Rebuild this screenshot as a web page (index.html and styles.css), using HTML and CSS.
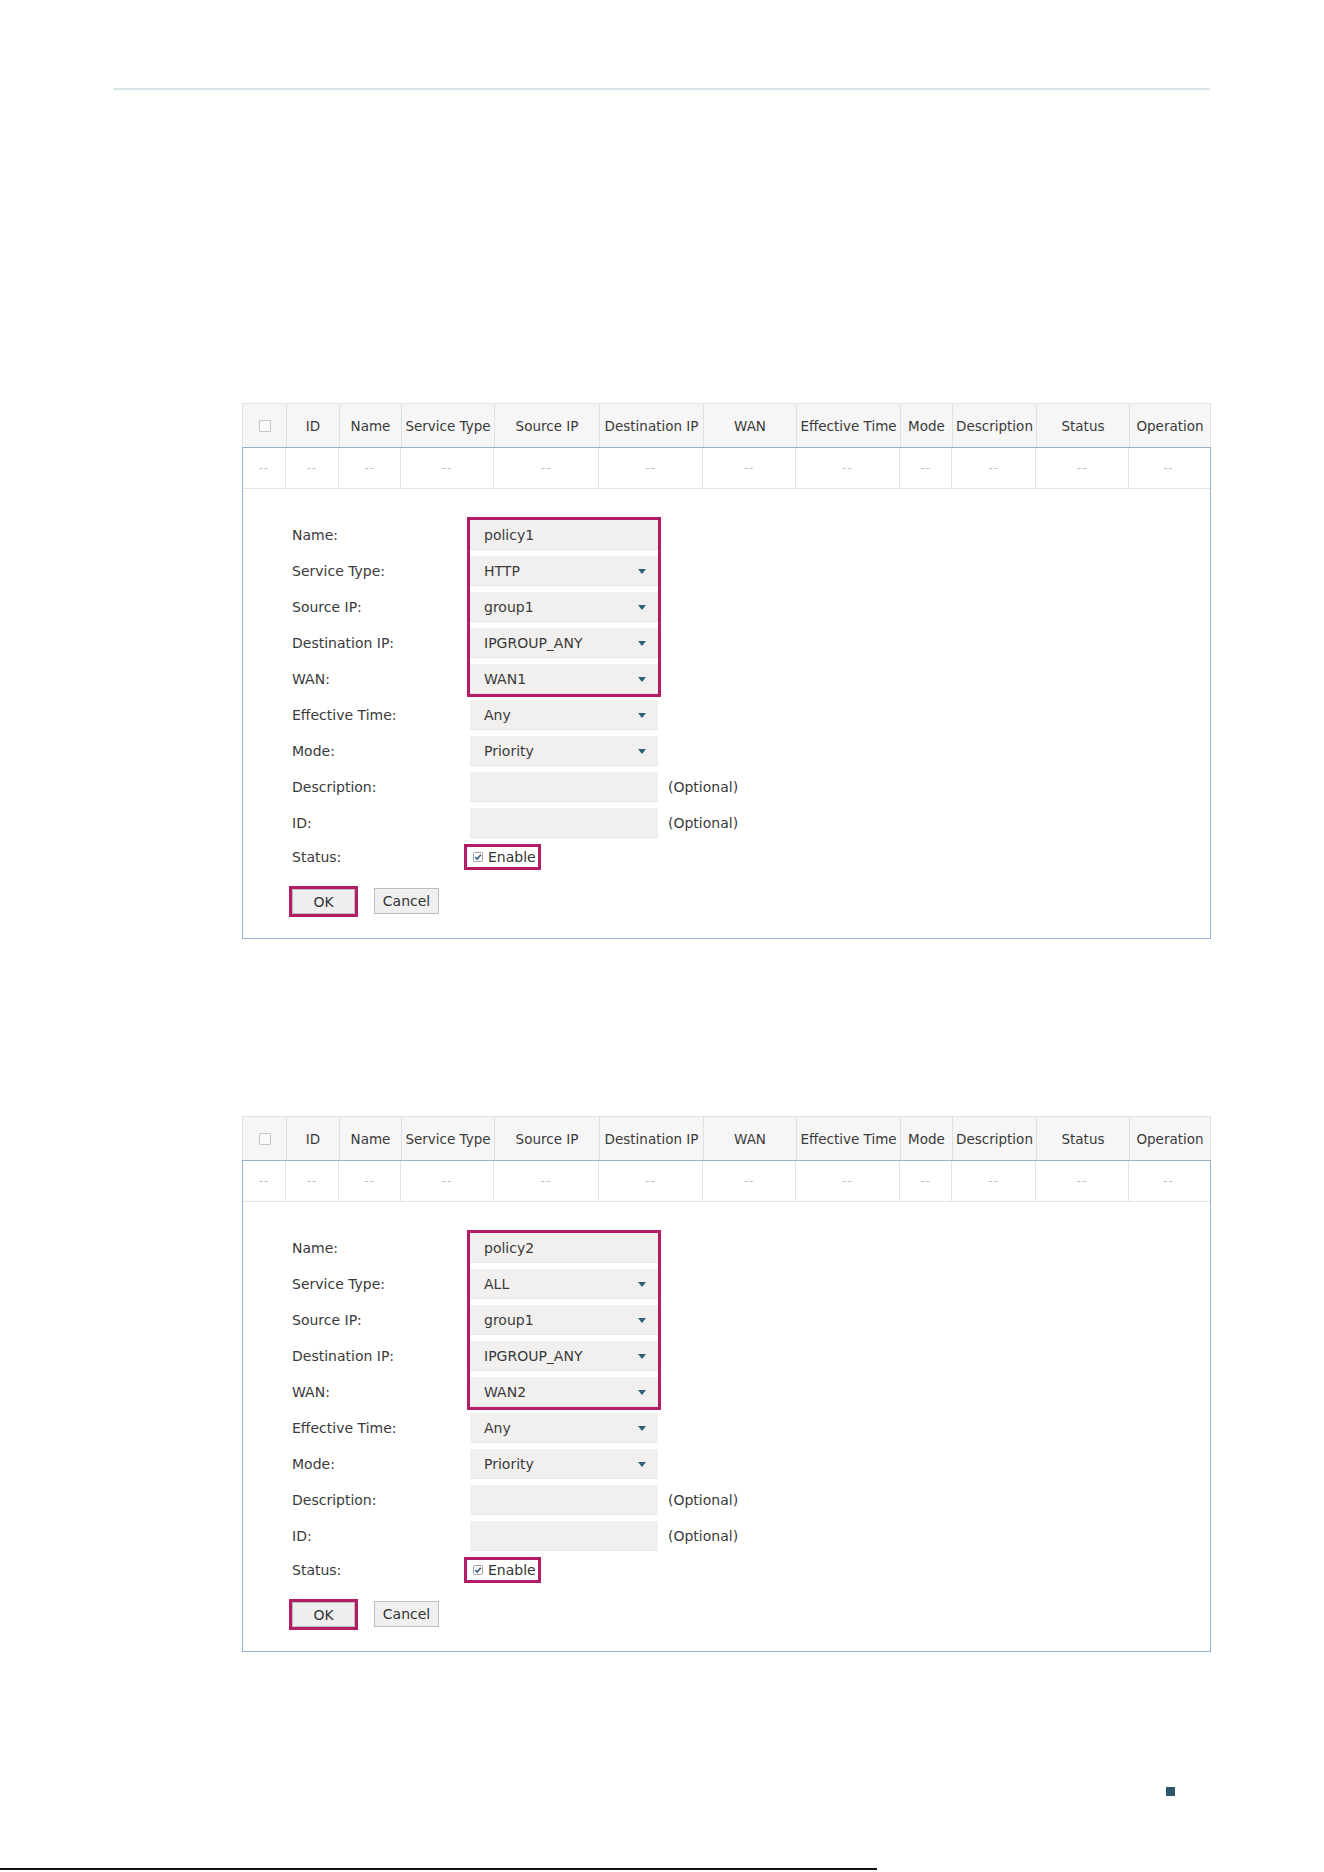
FILE: index.html
```html
<!DOCTYPE html>
<html lang="en">
<head>
  <meta charset="UTF-8">
  <meta name="viewport" content="width=device-width, initial-scale=1.0">
  <title>Policy Routing</title>
  <link rel="stylesheet" href="styles.css">
</head>
<body>

  <div class="page">
    <div class="top-rule"></div>

    <!-- Screenshot 1: policy1 on WAN1 -->
    <div class="shot">
      <div class="table-head">
        <div class="th"><span class="head-box"></span></div>
        <div class="th">ID</div>
        <div class="th">Name</div>
        <div class="th">Service Type</div>
        <div class="th">Source IP</div>
        <div class="th">Destination IP</div>
        <div class="th">WAN</div>
        <div class="th">Effective Time</div>
        <div class="th">Mode</div>
        <div class="th">Description</div>
        <div class="th">Status</div>
        <div class="th">Operation</div>
      </div>
      <div class="panel">
        <div class="table-row">
          <div class="td">--</div><div class="td">--</div><div class="td">--</div>
          <div class="td">--</div><div class="td">--</div><div class="td">--</div>
          <div class="td">--</div><div class="td">--</div><div class="td">--</div>
          <div class="td">--</div><div class="td">--</div><div class="td">--</div>
        </div>
        <div class="form">
          <div class="form-grid">
            <div class="label">Name:</div>
            <div class="mark">
              <div class="field">policy1</div>
              <div class="field select">HTTP</div>
              <div class="field select">group1</div>
              <div class="field select">IPGROUP_ANY</div>
              <div class="field select">WAN1</div>
            </div>
            <div class="label">Service Type:</div>
            <div class="label">Source IP:</div>
            <div class="label">Destination IP:</div>
            <div class="label">WAN:</div>

            <div class="label">Effective Time:</div>
            <div class="field select">Any</div>
            <div class="label">Mode:</div>
            <div class="field select">Priority</div>
            <div class="label">Description:</div>
            <div class="field-line"><div class="field"></div><span class="hint">(Optional)</span></div>
            <div class="label">ID:</div>
            <div class="field-line"><div class="field"></div><span class="hint">(Optional)</span></div>
            <div class="label label-short">Status:</div>
            <div class="status-line">
              <span class="enable-mark">
                <svg class="check" width="10" height="10" viewBox="0 0 10 10"><rect x="0.5" y="0.5" width="9" height="9" rx="1" fill="#fff" stroke="#a0a0a0"/><path d="M2.3 5.2 L4.2 7 L7.8 2.8" fill="none" stroke="#2f5f86" stroke-width="1.6"/></svg>
                Enable
              </span>
            </div>
          </div>
          <div class="buttons">
            <button class="btn btn-marked">OK</button>
            <button class="btn">Cancel</button>
          </div>
        </div>
      </div>
    </div>

    <!-- Screenshot 2: policy2 on WAN2 -->
    <div class="shot shot-second">
      <div class="table-head">
        <div class="th"><span class="head-box"></span></div>
        <div class="th">ID</div>
        <div class="th">Name</div>
        <div class="th">Service Type</div>
        <div class="th">Source IP</div>
        <div class="th">Destination IP</div>
        <div class="th">WAN</div>
        <div class="th">Effective Time</div>
        <div class="th">Mode</div>
        <div class="th">Description</div>
        <div class="th">Status</div>
        <div class="th">Operation</div>
      </div>
      <div class="panel">
        <div class="table-row">
          <div class="td">--</div><div class="td">--</div><div class="td">--</div>
          <div class="td">--</div><div class="td">--</div><div class="td">--</div>
          <div class="td">--</div><div class="td">--</div><div class="td">--</div>
          <div class="td">--</div><div class="td">--</div><div class="td">--</div>
        </div>
        <div class="form">
          <div class="form-grid">
            <div class="label">Name:</div>
            <div class="mark">
              <div class="field">policy2</div>
              <div class="field select">ALL</div>
              <div class="field select">group1</div>
              <div class="field select">IPGROUP_ANY</div>
              <div class="field select">WAN2</div>
            </div>
            <div class="label">Service Type:</div>
            <div class="label">Source IP:</div>
            <div class="label">Destination IP:</div>
            <div class="label">WAN:</div>

            <div class="label">Effective Time:</div>
            <div class="field select">Any</div>
            <div class="label">Mode:</div>
            <div class="field select">Priority</div>
            <div class="label">Description:</div>
            <div class="field-line"><div class="field"></div><span class="hint">(Optional)</span></div>
            <div class="label">ID:</div>
            <div class="field-line"><div class="field"></div><span class="hint">(Optional)</span></div>
            <div class="label label-short">Status:</div>
            <div class="status-line">
              <span class="enable-mark">
                <svg class="check" width="10" height="10" viewBox="0 0 10 10"><rect x="0.5" y="0.5" width="9" height="9" rx="1" fill="#fff" stroke="#a0a0a0"/><path d="M2.3 5.2 L4.2 7 L7.8 2.8" fill="none" stroke="#2f5f86" stroke-width="1.6"/></svg>
                Enable
              </span>
            </div>
          </div>
          <div class="buttons">
            <button class="btn btn-marked">OK</button>
            <button class="btn">Cancel</button>
          </div>
        </div>
      </div>
    </div>

    <div class="page-mark"></div>
    <div class="foot-rule"></div>
  </div>

</body>
</html>
```

FILE: styles.css
```css
* {
  box-sizing: border-box;
}
body {
  margin: 0;
  background: #fff;
  font-family: "DejaVu Sans", Verdana, sans-serif;
  color: #333;
}
.page {
  width: 1324px;
  height: 1872px;
  overflow: hidden;
  display: flow-root;
}
.top-rule {
  margin: 88px 0 0 113px;
  width: 1097px;
  height: 2px;
  background: #d9e4e8;
}
.shot {
  margin: 313px 0 0 242px;
  width: 969px;
}
.shot-second {
  margin-top: 177px;
}

/* table header */
.table-head {
  display: grid;
  grid-template-columns: 43px 53px 62px 93px 105px 104px 93px 104px 52px 84px 93px 81px;
  height: 44px;
  border: 1px solid #e3e3e3;
  border-bottom: none;
  background: #f6f6f6;
}
.th {
  display: flex;
  align-items: center;
  justify-content: center;
  font-size: 13.5px;
  color: #3a3a3a;
  white-space: nowrap;
  overflow: hidden;
  border-left: 1px solid #e0e0e0;
}
.th:first-child {
  border-left: none;
}
.head-box {
  width: 12px;
  height: 12px;
  border: 1px solid #c4c4c4;
  border-radius: 1px;
  background: #fbfbfb;
}

/* panel with the empty row and the form */
.panel {
  border: 1px solid #96b1cd;
}
.table-row {
  display: grid;
  grid-template-columns: 42px 53px 62px 93px 105px 104px 93px 104px 52px 84px 93px 80px;
  height: 41px;
  border-bottom: 1px solid #e3e3e3;
}
.td {
  display: flex;
  align-items: center;
  justify-content: center;
  font-size: 12px;
  letter-spacing: 1px;
  color: #bdbdbd;
  border-left: 1px solid #e3e3e3;
}
.td:first-child {
  border-left: none;
}
.form {
  padding: 31px 0 24px 49px;
}
.form-grid {
  display: grid;
  grid-template-columns: 178px auto;
  grid-auto-rows: 30px;
  row-gap: 6px;
  justify-items: start;
}
.label {
  display: flex;
  align-items: center;
  font-size: 14px;
  color: #3a3a3a;
}
.label-short {
  height: 26px;
}
.mark {
  grid-row: span 5;
  display: flex;
  flex-direction: column;
  gap: 6px;
  outline: 3px solid #b31d66;
}
.field {
  position: relative;
  width: 188px;
  height: 30px;
  display: flex;
  align-items: center;
  padding-left: 14px;
  font-size: 14px;
  color: #3a3a3a;
  background: #f1f0ef;
  border-bottom: 1px solid #e6e6e6;
}
.select::after {
  content: "";
  position: absolute;
  right: 12px;
  top: 13px;
  border-left: 4.5px solid transparent;
  border-right: 4.5px solid transparent;
  border-top: 5px solid #2f5f76;
}
.field-line {
  display: flex;
  align-items: center;
}
.hint {
  margin-left: 10px;
  font-size: 14px;
  color: #3a3a3a;
}
.status-line {
  display: flex;
  align-items: flex-start;
}
.enable-mark {
  display: inline-flex;
  align-items: center;
  gap: 5px;
  height: 26px;
  margin-left: -6px;
  padding: 0 2px 0 6px;
  border: 3px solid #b31d66;
  font-size: 14px;
  color: #333;
}
.buttons {
  display: flex;
  gap: 19px;
  margin-top: 14px;
}
.btn {
  width: 65px;
  height: 26px;
  padding: 0;
  font-family: "DejaVu Sans", Verdana, sans-serif;
  font-size: 14px;
  color: #333;
  background: #efefef;
  border: 1px solid #bdbdbd;
  cursor: pointer;
}
.btn-marked {
  width: 63px;
  height: 25px;
  margin-top: 1px;
  outline: 3px solid #b31d66;
}

/* footer bits */
.page-mark {
  margin: 135px 0 0 1166px;
  width: 9px;
  height: 9px;
  background: #2b566b;
}
.foot-rule {
  margin-top: 72px;
  width: 877px;
  height: 2px;
  background: #111;
}
```
